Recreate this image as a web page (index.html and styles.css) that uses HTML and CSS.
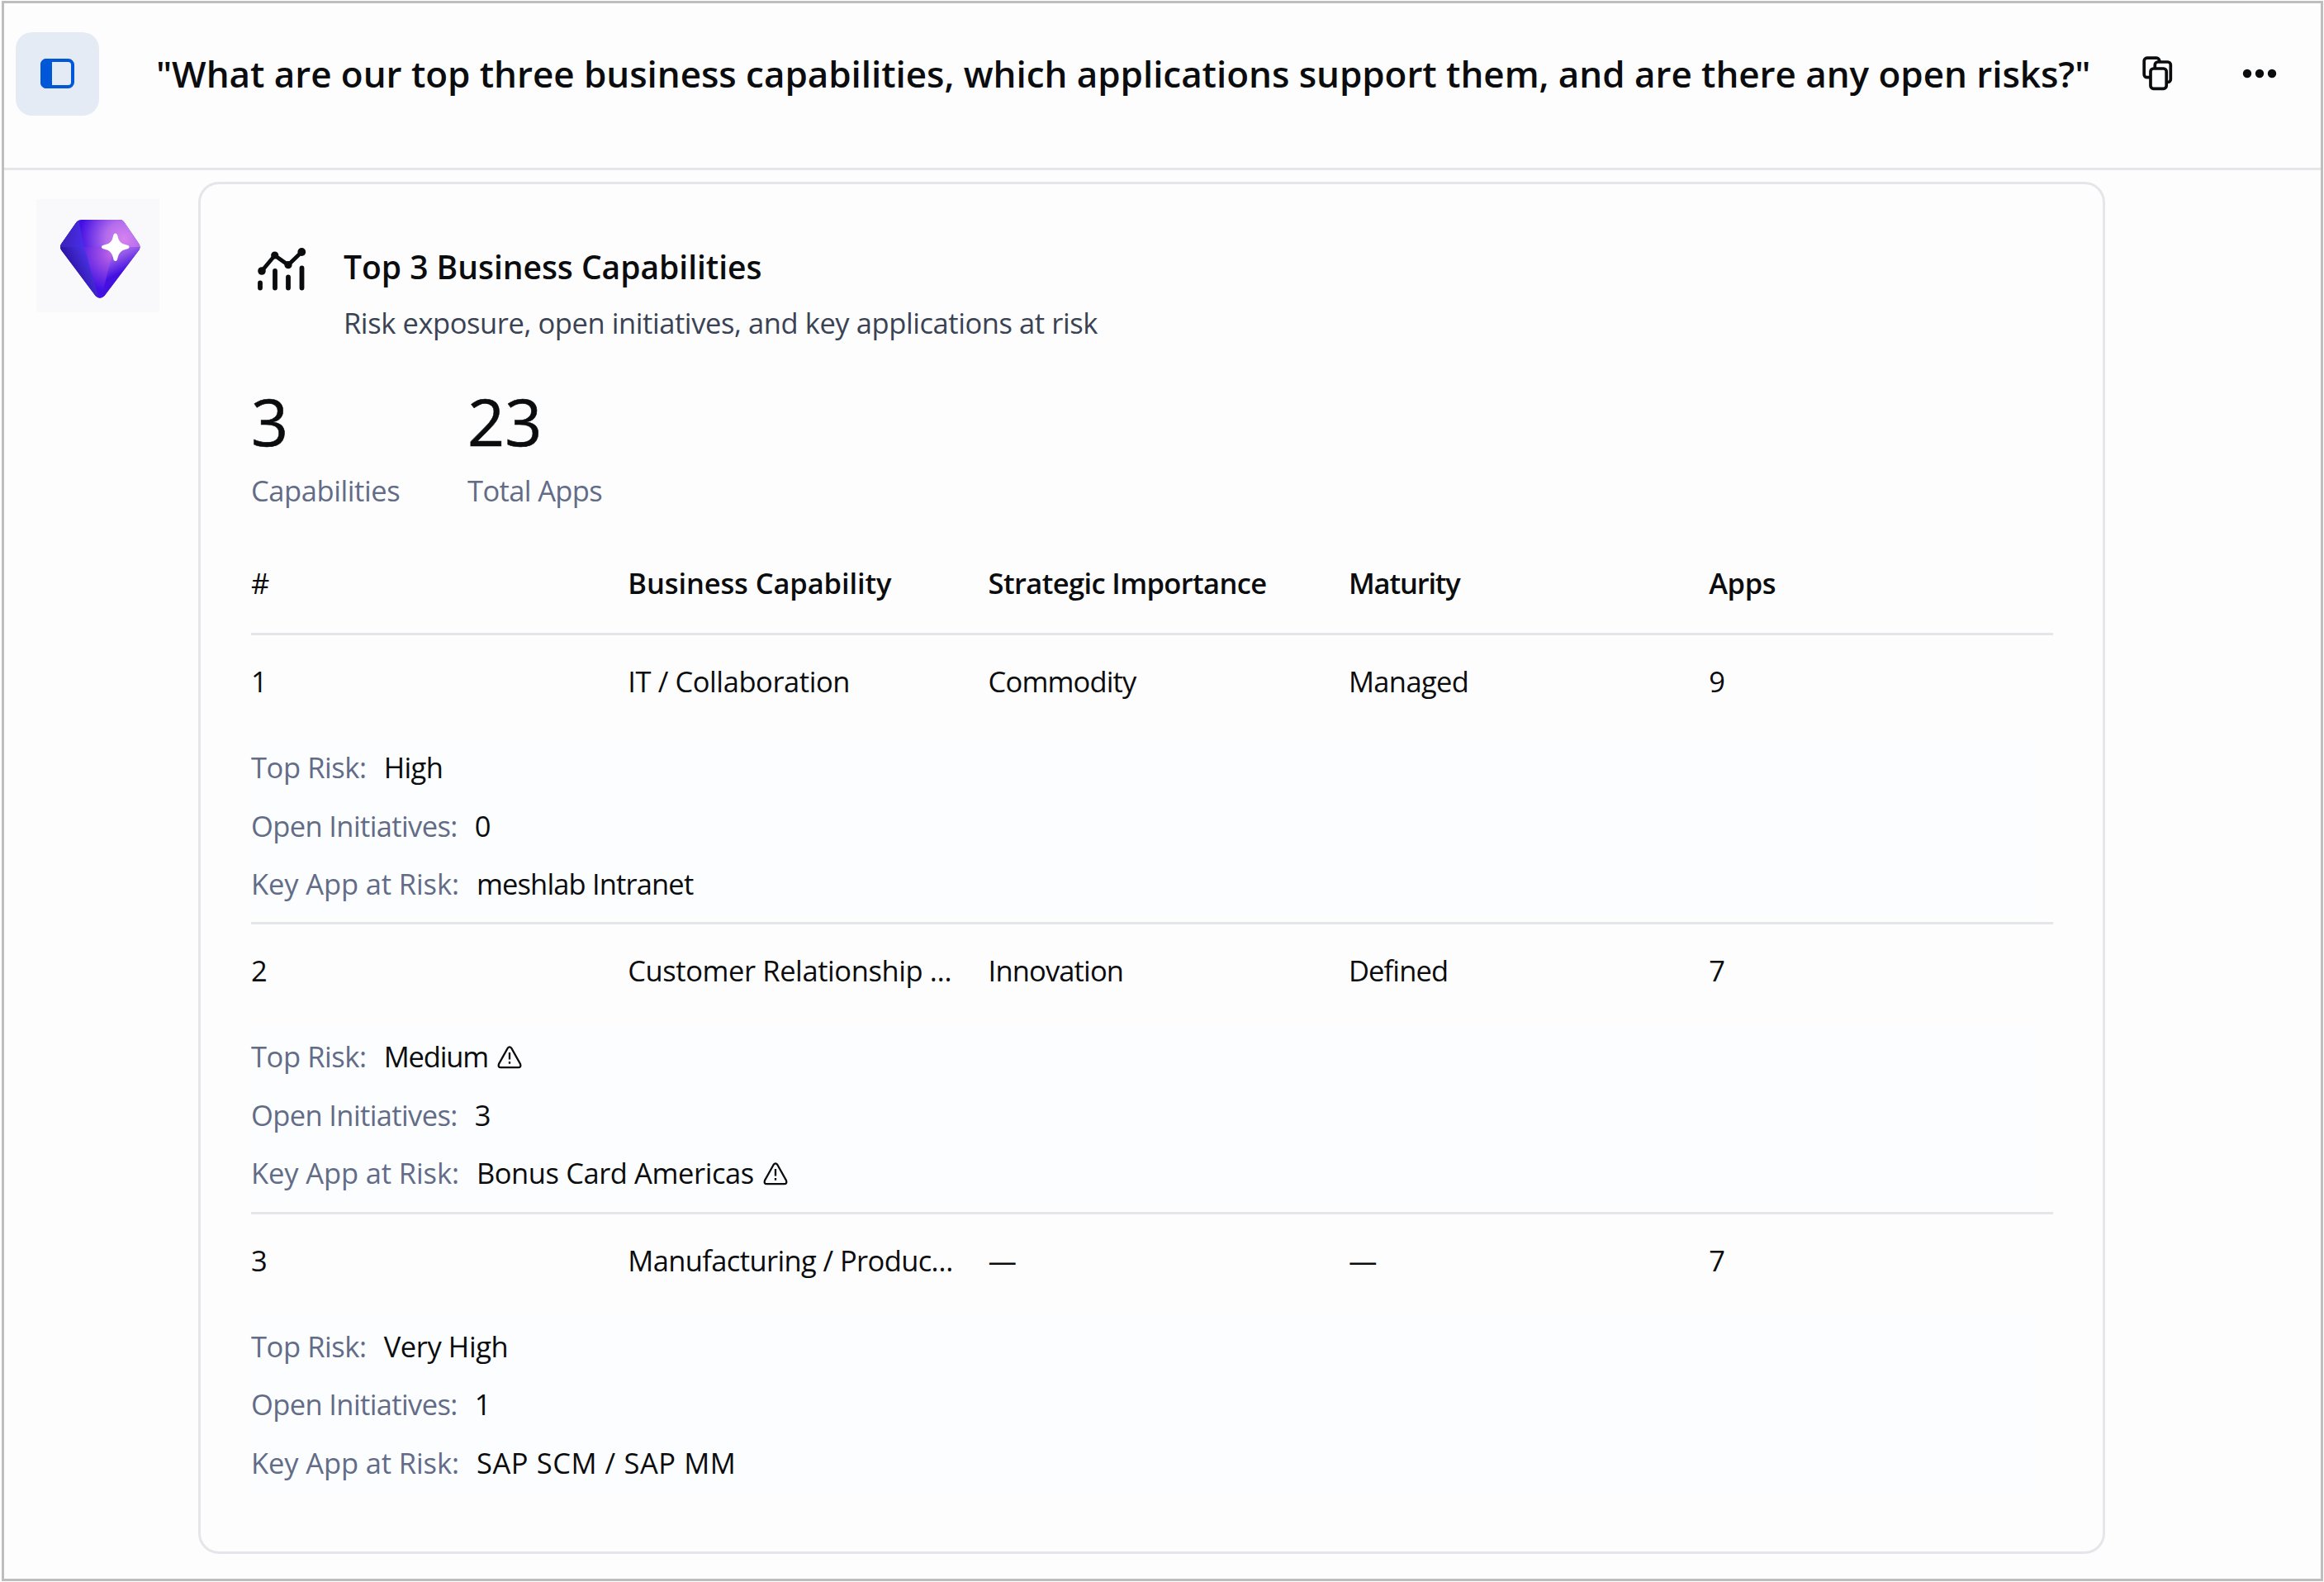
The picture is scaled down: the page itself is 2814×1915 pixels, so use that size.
FILE: index.html
```
<!DOCTYPE html>
<html lang="en">
<head>
<meta charset="utf-8">
<title>Top 3 Business Capabilities</title>
<link rel="stylesheet" href="styles.css">
</head>
<body>
<div class="app">
  <header class="topbar">
    <button class="toggle" aria-label="Toggle side panel">
      <svg width="41" height="36" viewBox="0 0 41 36"><rect x="2" y="2" width="37" height="32" rx="5.500" fill="none" stroke="currentColor" stroke-width="4"/><path d="M7 0H14V36H7A7 7 0 0 1 0 29V7A7 7 0 0 1 7 0Z" fill="currentColor"/></svg>
    </button>
    <h1 class="question">"What are our top three business capabilities, which applications support them, and are there any open risks?"</h1>
    <button class="icon-btn copy" aria-label="Copy">
      <svg width="38" height="42" viewBox="0 0 38 42" fill="#fdfdfe" stroke="currentColor" stroke-width="3.700"><rect x="2.200" y="2.200" width="18.500" height="23.500" rx="3.500"/><rect x="15.300" y="7" width="19" height="24.500" rx="3.500"/><rect x="10" y="15" width="19.200" height="24.300" rx="3.500"/></svg>
    </button>
    <button class="icon-btn more" aria-label="More">
      <svg width="42" height="12" viewBox="0 0 42 12" fill="currentColor"><circle cx="6" cy="6" r="5.200"/><circle cx="21" cy="6" r="5.200"/><circle cx="36" cy="6" r="5.200"/></svg>
    </button>
  </header>
  <main class="chat">
    <div class="avatar">
      <svg width="149" height="137" viewBox="0 0 149 137">
        <defs>
          <radialGradient id="glow" gradientUnits="userSpaceOnUse" cx="106" cy="48" r="54"><stop offset="0" stop-color="#d682f0"/><stop offset=".4" stop-color="#b46cec"/><stop offset="1" stop-color="#4210e4"/></radialGradient>
          <radialGradient id="glow-low" gradientUnits="userSpaceOnUse" cx="92" cy="66" r="46"><stop offset="0" stop-color="#c568e6"/><stop offset="1" stop-color="#4210e4"/></radialGradient>
          <linearGradient id="edge" gradientUnits="userSpaceOnUse" x1="94" y1="58" x2="108" y2="86"><stop offset="0" stop-color="#b870ee"/><stop offset=".4" stop-color="#9458ea"/><stop offset="1" stop-color="#4410e0"/></linearGradient>
          <linearGradient id="side" gradientUnits="userSpaceOnUse" x1="32" y1="50" x2="60" y2="54"><stop offset="0" stop-color="#3d22bc"/><stop offset="1" stop-color="#4a2ef0"/></linearGradient>
          <linearGradient id="side-low" gradientUnits="userSpaceOnUse" x1="38" y1="78" x2="66" y2="64"><stop offset="0" stop-color="#2c14a4"/><stop offset="1" stop-color="#5038f4"/></linearGradient>
          <clipPath id="gem"><path d="M56 25H101Q104.500 25 106.500 28L124.500 54.500Q126.500 58 124.500 61.500L82.500 117Q77 122.500 71.500 117L30 61.500Q28 58 30 54.500L48.500 28Q51 25 56 25Z"/></clipPath>
        </defs>
        <g clip-path="url(#gem)">
          <path d="M26 20H128V122H26Z" fill="#4a1ce4"/>
          <path d="M26 20H128V58.500H26Z" fill="url(#glow)"/>
          <path d="M50 20L58 58H26V20Z" fill="url(#side)"/>
          <path d="M57.500 58H95L78 122H75Z" fill="url(#glow-low)"/>
          <path d="M94 58H128V122H78Z" fill="url(#edge)"/>
          <path d="M26 58H58L76 122H26Z" fill="url(#side-low)"/>
          <path d="M102 24L128 58V24Z" fill="#d08af4" opacity=".3"/>
        </g>
        <path d="M95.700 41.500Q98 41.500 98.500 45Q100 54 108.500 55.300Q112.500 56 112.500 58Q112.500 60 108.500 60.700Q100 62.500 98.500 71Q98 75 95.700 75Q93.500 75 93 71Q91.500 62.500 83 60.700Q79 60 79 58Q79 56 83 55.300Q91.500 54 93 45Q93.500 41.500 95.700 41.500Z" fill="#fff"/>
      </svg>
    </div>
    <section class="card">
      <div class="card-head">
        <svg class="chart" width="60" height="54" viewBox="312 299 60 54" fill="none" stroke="currentColor" stroke-linecap="round"><path d="M317 328L332.700 309.300L349 320.700L365.300 305" stroke-width="4.800" stroke-linejoin="round"/><path d="M315 342.500V348.500M333 328V348.500M349 335.500V348.500M365.500 324.500V348.500" stroke-width="5.800"/><g fill="currentColor" stroke="none"><circle cx="317" cy="328" r="4.800"/><circle cx="332.700" cy="309" r="4.600"/><circle cx="349" cy="320.700" r="4.600"/><circle cx="365.300" cy="305" r="4.900"/></g></svg>
        <div>
          <h2 class="card-title">Top 3 Business Capabilities</h2>
          <p class="card-sub">Risk exposure, open initiatives, and key applications at risk</p>
        </div>
      </div>
      <div class="stats">
        <div class="stat"><div class="num">3</div><div class="cap">Capabilities</div></div>
        <div class="stat"><div class="num">23</div><div class="cap snug">Total Apps</div></div>
      </div>
      <div class="table">
        <div class="row head"><span class="idx">#</span><span class="wide">Business Capability</span><span class="snug">Strategic Importance</span><span class="narrow">Maturity</span><span>Apps</span></div>
        <div class="group">
          <div class="row"><span>1</span><span>IT / Collaboration</span><span class="tight">Commodity</span><span class="snug">Managed</span><span>9</span></div>
          <div class="details">
            <div class="line"><span class="label">Top Risk:</span><span class="snug">High</span></div>
            <div class="line"><span class="label snug">Open Initiatives:</span><span>0</span></div>
            <div class="line"><span class="label wide">Key App at Risk:</span><span class="tight">meshlab Intranet</span></div>
          </div>
        </div>
        <div class="group">
          <div class="row"><span>2</span><span>Customer Relationship …</span><span class="tight">Innovation</span><span class="tight">Defined</span><span>7</span></div>
          <div class="details">
            <div class="line"><span class="label">Top Risk:</span><span class="narrow">Medium</span><svg class="warn" width="30" height="28" viewBox="0 0 30 28" fill="none" stroke="currentColor" stroke-width="2.300"><path d="M12.700 2.800Q15 0 17.300 2.800L28 22Q29.300 26 25.500 26.200H4.500Q.700 26 2 22Z"/><path d="M15 8V16.500M15 19V21.800"/></svg></div>
            <div class="line"><span class="label snug">Open Initiatives:</span><span>3</span></div>
            <div class="line"><span class="label wide">Key App at Risk:</span><span>Bonus Card Americas</span><svg class="warn" width="30" height="28" viewBox="0 0 30 28" fill="none" stroke="currentColor" stroke-width="2.300"><path d="M12.700 2.800Q15 0 17.300 2.800L28 22Q29.300 26 25.500 26.200H4.500Q.700 26 2 22Z"/><path d="M15 8V16.500M15 19V21.800"/></svg></div>
          </div>
        </div>
        <div class="group">
          <div class="row"><span>3</span><span class="snug">Manufacturing / Produc…</span><span>—</span><span>—</span><span>7</span></div>
          <div class="details">
            <div class="line"><span class="label">Top Risk:</span><span>Very High</span></div>
            <div class="line"><span class="label snug">Open Initiatives:</span><span>1</span></div>
            <div class="line"><span class="label wide">Key App at Risk:</span><span class="caps">SAP SCM / SAP MM</span></div>
          </div>
        </div>
      </div>
    </section>
  </main>
</div>
</body>
</html>
```
FILE: styles.css
```
* { box-sizing: border-box; }
body {
  margin: 0;
  padding: 1px 1px 1px 2px;
  height: 1915px;
  background: #fff;
  color: #0b0c0e;
  font-family: "Open Sans", "Noto Sans", sans-serif;
  font-size: 34.5px;
  letter-spacing: -0.42px;
}
h1, h2, p { margin: 0; }
svg { display: block; flex: none; }
button { border: 0; padding: 0; background: none; color: inherit; display: flex; align-items: center; justify-content: center; flex: none; }

.app { height: 1913px; border: 3px solid #bebebe; background: #fdfdfe; }

.topbar { height: 202px; padding: 35px 53px 0 14px; border-bottom: 3px solid #e5e6e9; display: flex; align-items: flex-start; }
.toggle { width: 101px; height: 101px; padding-bottom: 1px; border-radius: 20px; background: #e5ebf5; color: #0057d8; }
.question { width: 2345px; margin-left: 69px; font-size: 44px; font-weight: 600; line-height: 100px; letter-spacing: -0.05px; white-space: nowrap; }
.icon-btn { height: 99px; }
.copy { margin-left: 60px; }
.more { margin-left: auto; }

.chat { padding: 14px 0 0 39px; display: flex; align-items: flex-start; }
.avatar { width: 149px; height: 137px; margin-top: 21px; background: #f9f9fb; }
.card { width: 2309px; height: 1661px; margin-left: 47px; padding: 70px 60px 0 61px; border: 3px solid #e5e6e9; border-radius: 25px; background: #fdfdfe; }

.card-head { display: flex; }
.chart { margin: 6px 44px 0 8px; }
.card-title { font-size: 39px; font-weight: 600; line-height: 60px; letter-spacing: -0.03px; }
.card-sub { margin-top: 8px; line-height: 60px; color: #3a4354; }

.stats { display: flex; margin-top: 44px; }
.stat { width: 262px; }
.num { font-size: 79px; line-height: 90px; letter-spacing: 0; -webkit-text-stroke: 0.6px currentColor; }
.cap { margin-top: 14px; line-height: 50px; color: #626c87; }

.table { margin-top: 52px; }
.row { display: grid; grid-template-columns: 416px repeat(4, 396px); column-gap: 40.3px; height: 125px; line-height: 112px; white-space: nowrap; }
.head { height: 95px; line-height: 70px; font-weight: 600; }
.idx { font-weight: 500; }
.group { height: 350.3px; border-top: 3px solid #e5e6e9; }
.details { width: 2162px; background: #fcfdfe; }
.line { height: 70.6px; line-height: 70.6px; display: flex; align-items: center; white-space: pre; }
.label { margin-right: 21px; color: #626c87; }
.warn { margin: 0 0 0 11px; }

/* optical tracking steps */
.wide { letter-spacing: -0.12px; }
.snug { letter-spacing: -0.62px; }
.tight { letter-spacing: -0.85px; }
.narrow { letter-spacing: -1.15px; }
.caps { letter-spacing: 0.58px; }
```
